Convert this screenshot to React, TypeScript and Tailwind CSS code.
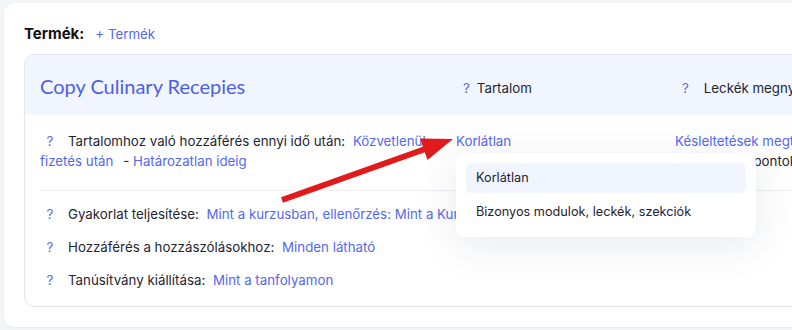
import React from 'react';

const LINK = 'text-[#5468ee]';

const Q: React.FC<{ className?: string }> = ({ className = '' }) => (
  <span className={`inline-block w-5 text-center ${LINK} ${className}`}>?</span>
);

const menuItems = ['Korlátlan', 'Bizonyos modulok, leckék, szekciók'];

const App: React.FC = () => {
  return (
    <div className="relative w-[792px] h-[330px] overflow-hidden bg-[#f4f5f8] pt-[3px] pl-1 font-['Inter',sans-serif] text-[13.3px] text-[#1f2430]">
      <div className="w-[1000px] rounded-[10px] bg-white px-5 pt-[21px] pb-5 shadow-[0_1px_3px_rgba(15,23,42,0.05)]">
        {/* Product line */}
        <div className="flex items-center h-5 leading-5">
          <span className="font-bold text-[15px] text-[#111]">Termék:</span>
          <span className={`ml-[11px] ${LINK}`}>+ Termék</span>
        </div>

        {/* Course card */}
        <div className="mt-[10px] rounded-[10px] border border-[#e3e5ec] overflow-hidden">
          <div className="grid grid-cols-[416px_219px_1fr] items-center h-[60px] bg-[#f0f5ff] px-[15px]">
            <div className="font-['Lato',sans-serif] text-[20px] text-[#4c60e6] pt-px">Copy Culinary Recepies</div>
            <div className="flex items-center pl-[7px] pt-[7px]">
              <span className={LINK}>?</span>
              <span className="ml-[7px]">Tartalom</span>
            </div>
            <div className="flex items-center pl-[7px] pt-[7px]">
              <span className={LINK}>?</span>
              <span className="ml-[15px] whitespace-nowrap">Leckék megnyitásának ideje</span>
            </div>
          </div>

          <div className="px-[15px]">
            <div className="grid grid-cols-[416px_219px_1fr] pt-4 pb-[19px] leading-5 border-b border-[#eceef2]">
              <div className="pr-4">
                <Q className="mr-2" />
                <span>Tartalomhoz való hozzáférés ennyi idő után:</span>{' '}
                <span className={`ml-1 ${LINK}`}>Közvetlenül fizetés után</span>{' '}
                <span className="ml-1.5">-</span>{' '}
                <span className={LINK}>Határozatlan ideig</span>
              </div>
              <div className="relative">
                <span className={LINK}>Korlátlan</span>
                {/* open select menu */}
                <div className="absolute left-0 top-[22px] z-10 w-[300px] rounded-lg bg-white p-2.5 flex flex-col gap-1 shadow-[0_8px_40px_rgba(30,41,80,0.10)]">
                  {menuItems.map((item, i) => (
                    <div
                      key={item}
                      className={`h-[30px] flex items-center px-2.5 rounded-md text-[12.7px] ${i === 0 ? 'bg-[#f0f5ff]' : ''}`}
                    >
                      {item}
                    </div>
                  ))}
                </div>
              </div>
              <div className="whitespace-nowrap">
                <div className={LINK}>Késleltetések megtekintése</div>
                <div>Rögzített időpontok szerint</div>
              </div>
            </div>

            <div className="flex flex-col gap-[13px] pt-[13px] pb-4 leading-5">
              <div>
                <Q className="mr-2" />
                <span>Gyakorlat teljesítése:</span>{' '}
                <span className={`ml-1 ${LINK}`}>Mint a kurzusban, ellenőrzés: Mint a Kurzusban</span>
              </div>
              <div>
                <Q className="mr-2" />
                <span>Hozzáférés a hozzászólásokhoz:</span>{' '}
                <span className={`ml-1 ${LINK}`}>Minden látható</span>
              </div>
              <div>
                <Q className="mr-2" />
                <span>Tanúsítvány kiállítása:</span>{' '}
                <span className={`ml-1 ${LINK}`}>Mint a tanfolyamon</span>
              </div>
            </div>
          </div>
        </div>
      </div>

      {/* Annotation arrow */}
      <svg className="pointer-events-none absolute left-0 top-0 z-20" width="792" height="330">
        <line x1="282" y1="200" x2="428" y2="148" stroke="#e11b1b" strokeWidth="6" />
        <polygon points="453,139 427.5,160 420,138.5" fill="#e11b1b" />
      </svg>
    </div>
  );
};

export default App;
